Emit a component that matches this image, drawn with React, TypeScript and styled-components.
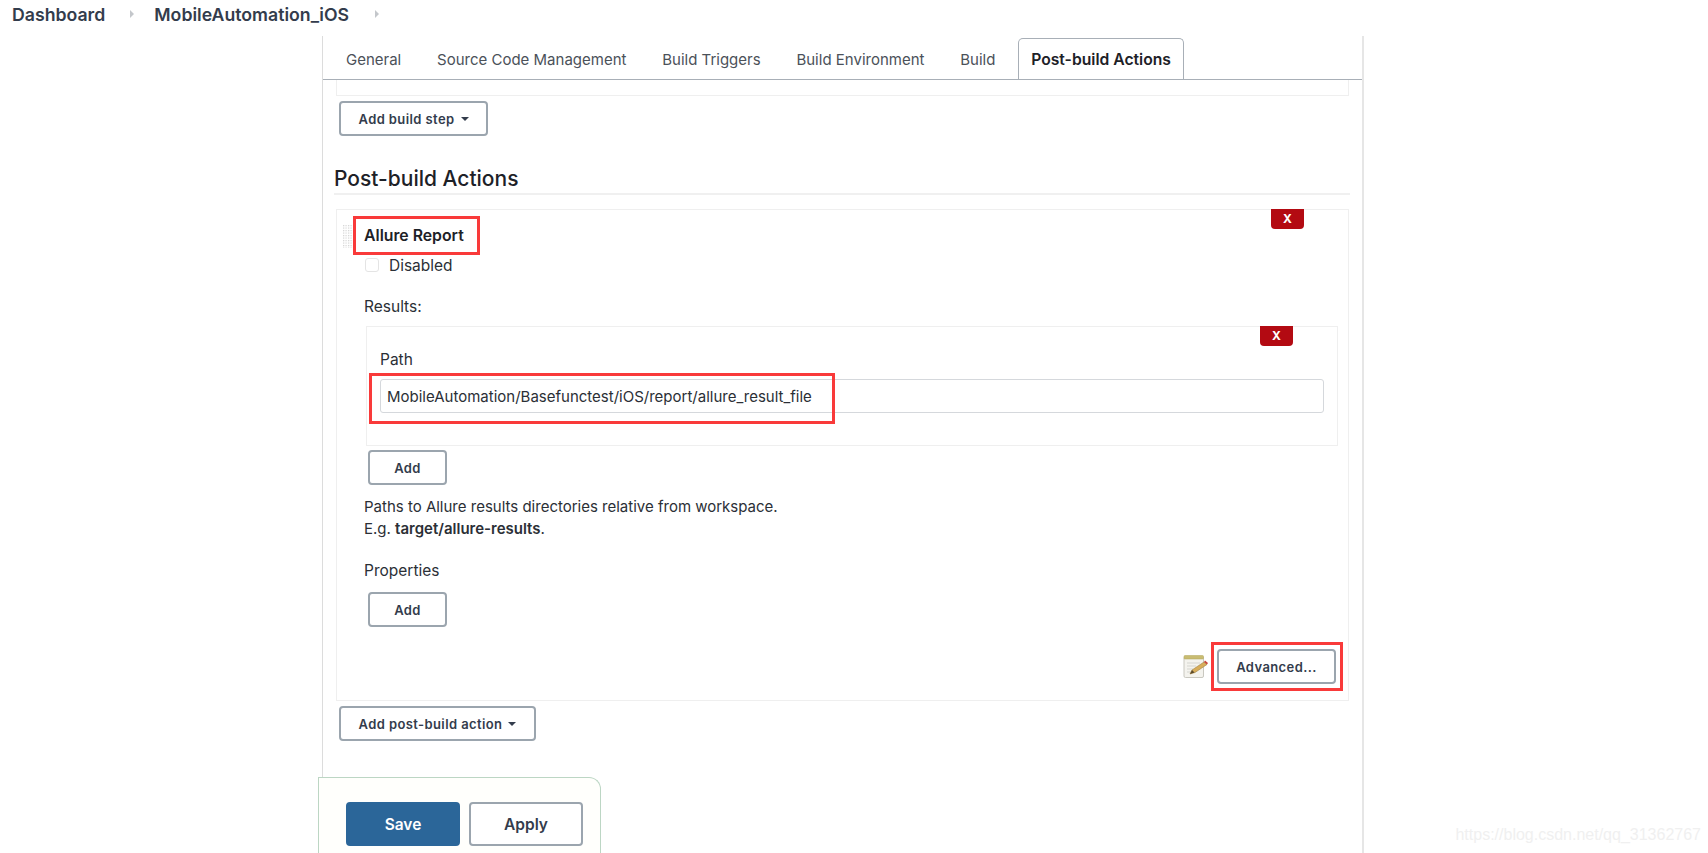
import styled, { createGlobalStyle } from 'styled-components';

const GlobalStyle = createGlobalStyle`
  html,
  body {
    margin: 0;
    height: 100%;
    overflow: hidden;
    background: #fff;
    font-family: Inter, 'Liberation Sans', sans-serif;
    color: #2b2f36;
  }

  * {
    box-sizing: border-box;
  }
`;

const Page = styled.div`
  position: relative;
  width: 1708px;
  height: 853px;
  overflow: hidden;
`;

const Breadcrumbs = styled.nav`
  display: flex;
  align-items: center;
  height: 36px;
  padding: 0 0 8px 12px;
  font-size: 17.7px;
  font-weight: 600;
  color: #333c4c;
`;

const CrumbArrow = styled.span<{ $before: number; $after: number }>`
  width: 0;
  height: 0;
  margin: 0 ${({ $after }) => $after}px 0 ${({ $before }) => $before}px;
  border-left: 4px solid #c4c7cb;
  border-top: 4px solid transparent;
  border-bottom: 4px solid transparent;
`;

const Column = styled.main`
  display: flex;
  flex-direction: column;
  width: 1042px;
  height: 817px;
  margin-left: 322px;
  border-left: 1px solid #dcdcdc;
  border-right: 2px solid #e6e6e6;
`;

const TabBar = styled.div`
  display: flex;
  align-items: flex-end;
  flex: none;
  height: 44px;
  padding: 2px 0 0 10px;
  border-bottom: 1px solid #a8afb7;
`;

const Tab = styled.div<{ $active?: boolean }>`
  height: 41px;
  padding: 0 12px;
  margin-right: ${({ $active }) => ($active ? 0 : 9.8)}px;
  border: 1px solid ${({ $active }) => ($active ? '#a8afb7' : 'transparent')};
  border-bottom: 0;
  border-radius: 5px 5px 0 0;
  font-size: ${({ $active }) => ($active ? 15.7 : 15)}px;
  font-weight: ${({ $active }) => ($active ? 600 : 400)};
  line-height: 41px;
  color: ${({ $active }) => ($active ? '#1d2127' : '#4b5159')};
  white-space: nowrap;
`;

const PreviousSection = styled.div`
  flex: none;
  height: 16px;
  margin: 0 13px;
  border: 1px solid #efefef;
  border-top: 0;
`;

const Button = styled.button<{ $width: number }>`
  display: flex;
  align-items: center;
  justify-content: center;
  gap: 6px;
  flex: none;
  width: ${({ $width }) => $width}px;
  height: 35px;
  padding: 0;
  background: #fff;
  border: 2px solid #9ba5ae;
  border-radius: 4px;
  font-family: inherit;
  font-size: 13px;
  font-weight: 600;
  letter-spacing: 0.4px;
  color: #333c4c;
`;

const AddStepButton = styled(Button)`
  margin: 5px 0 0 16px;
`;

const Caret = styled.span`
  width: 0;
  height: 0;
  border-top: 4px solid #333c4c;
  border-left: 4px solid transparent;
  border-right: 4px solid transparent;
`;

const SectionTitle = styled.h2`
  flex: none;
  height: 30px;
  margin: 29px 12px 0 11px;
  border-bottom: 2px solid #f0f0f0;
  font-size: 21px;
  font-weight: 500;
  line-height: 28px;
  color: #1d2127;
`;

const ActionBox = styled.section`
  position: relative;
  flex: none;
  height: 492px;
  margin: 14px 13px 0;
  padding: 0 12px 0 27px;
  border: 1px solid #efefef;
`;

const DragHandle = styled.svg`
  position: absolute;
  top: 15px;
  left: 6px;
`;

const DeleteButton = styled.div`
  position: absolute;
  top: -1px;
  right: 44px;
  width: 33px;
  height: 20px;
  background: #b30a12;
  border-radius: 0 0 4px 4px;
  font-size: 12px;
  font-weight: 700;
  line-height: 20px;
  text-align: center;
  color: #fff;
`;

const TitleRow = styled.div`
  margin-top: 15px;
`;

const ActionTitle = styled.span`
  position: relative;
  font-size: 15.8px;
  font-weight: 600;
  line-height: 22px;
  color: #1d2127;
`;

const RedMark = styled.span<{ $top: number; $right: number; $bottom: number; $left: number }>`
  position: absolute;
  top: ${({ $top }) => $top}px;
  right: ${({ $right }) => $right}px;
  bottom: ${({ $bottom }) => $bottom}px;
  left: ${({ $left }) => $left}px;
  border: 3px solid #f93a3a;
  pointer-events: none;
`;

const CheckRow = styled.div`
  display: flex;
  align-items: center;
  height: 22px;
  margin-top: 7px;
  padding-left: 1px;
  font-size: 15.5px;
`;

const CheckBox = styled.span`
  width: 14px;
  height: 14px;
  margin-right: 10px;
  border: 1px solid #e4e4e4;
  border-radius: 3px;
`;

const Label = styled.div<{ $top: number }>`
  margin-top: ${({ $top }) => $top}px;
  font-size: 15.5px;
  line-height: 22px;
  color: #2b2f36;
`;

const ResultsBox = styled.div`
  position: relative;
  width: 972px;
  height: 120px;
  margin: 8px 0 0 2px;
  padding: 22px 13px 0;
  border: 1px solid #efefef;
`;

const PathField = styled.div`
  position: relative;
  margin-top: 8px;
`;

const PathInput = styled.input`
  display: block;
  width: 100%;
  height: 34px;
  padding: 0 6px;
  border: 1px solid #d5d8dc;
  border-radius: 3px;
  font-family: inherit;
  font-size: 15px;
  color: #2b2f36;
  background: #fff;
`;

const SmallButton = styled(Button)<{ $top: number }>`
  margin: ${({ $top }) => $top}px 0 0 4px;
`;

const Help = styled.div`
  margin-top: 11px;
  font-size: 15px;
  line-height: 22px;
  color: #2b2f36;
`;

const HelpStrong = styled.strong`
  font-weight: 600;
`;

const AdvancedRow = styled.div`
  display: flex;
  align-items: center;
  justify-content: flex-end;
  gap: 9px;
  margin-top: 22px;
`;

const AdvancedButton = styled(Button)`
  position: relative;
`;

const AddActionButton = styled(Button)`
  margin: 5px 0 0 16px;
`;

const BottomBar = styled.footer`
  display: flex;
  gap: 9px;
  flex: none;
  width: 283px;
  height: 80px;
  margin: 36px 0 0 -5px;
  padding: 24px 0 0 27px;
  background: #fffffc;
  border: 1px solid #bcd6c4;
  border-bottom: 0;
  border-radius: 0 12px 0 0;
`;

const BarButton = styled.button<{ $primary?: boolean }>`
  width: 114px;
  height: 44px;
  padding: 0;
  background: ${({ $primary }) => ($primary ? '#2b6699' : '#fff')};
  border: 2px solid ${({ $primary }) => ($primary ? '#2b6699' : '#9ba5ae')};
  border-radius: 4px;
  font-family: inherit;
  font-size: 15.5px;
  font-weight: 600;
  color: ${({ $primary }) => ($primary ? '#fff' : '#333c4c')};
`;

const Watermark = styled.div`
  position: absolute;
  right: 7px;
  bottom: 8px;
  font-family: 'Liberation Sans', Arial, sans-serif;
  font-size: 16px;
  line-height: 20px;
  color: #f0f0f0;
`;

const NotepadIcon = () => (
  <svg width="25" height="25" viewBox="0 0 25 25" aria-hidden>
    <path d="M1 3.5h19.5v18.5a1.5 1.5 0 0 1-1.5 1.5H2.5A1.5 1.5 0 0 1 1 22z" fill="#f4f3ee" stroke="#c9c8c0" />
    <rect x="1" y="1.5" width="19.5" height="3.5" rx="1" fill="#c9bc72" stroke="#b0a458" strokeWidth="0.5" />
    <path d="M4 9h13M4 12h9M4 15h6M4 18h5" stroke="#d5d5d0" />
    <path d="M7 20l2-4L21 8l3 2.5-12 8z" fill="#d8ad5a" stroke="#a08345" strokeWidth="0.6" />
    <path d="M21 8l3 2.5 1-1.5-3-2.5z" fill="#c8453c" />
    <path d="M7 20l2-4 2.5 2.5z" fill="#5b4a2c" />
  </svg>
);

const App = () => (
  <Page>
    <GlobalStyle />
    <Breadcrumbs>
      Dashboard
      <CrumbArrow $before={25} $after={20} />
      MobileAutomation_iOS
      <CrumbArrow $before={26} $after={0} />
    </Breadcrumbs>
    <Column>
      <TabBar>
        <Tab>General</Tab>
        <Tab>Source Code Management</Tab>
        <Tab>Build Triggers</Tab>
        <Tab>Build Environment</Tab>
        <Tab>Build</Tab>
        <Tab $active>Post-build Actions</Tab>
      </TabBar>
      <PreviousSection />
      <AddStepButton $width={149}>
        Add build step
        <Caret />
      </AddStepButton>
      <SectionTitle>Post-build Actions</SectionTitle>
      <ActionBox>
        <DragHandle width="10" height="23" aria-hidden>
          <defs>
            <pattern id="dots" width="2.5" height="2.5" patternUnits="userSpaceOnUse">
              <rect width="1.2" height="1.2" fill="#d2d2d2" />
            </pattern>
          </defs>
          <rect width="10" height="23" fill="url(#dots)" />
        </DragHandle>
        <DeleteButton>X</DeleteButton>
        <TitleRow>
          <ActionTitle>
            Allure Report
            <RedMark $top={-10} $right={-16} $bottom={-10} $left={-11} />
          </ActionTitle>
        </TitleRow>
        <CheckRow>
          <CheckBox />
          Disabled
        </CheckRow>
        <Label $top={20}>Results:</Label>
        <ResultsBox>
          <DeleteButton>X</DeleteButton>
          <Label $top={0}>Path</Label>
          <PathField>
            <PathInput readOnly value="MobileAutomation/Basefunctest/iOS/report/allure_result_file" />
            <RedMark $top={-6} $right={489} $bottom={-11} $left={-11} />
          </PathField>
        </ResultsBox>
        <SmallButton $width={79} $top={4}>
          Add
        </SmallButton>
        <Help>
          Paths to Allure results directories relative from workspace.
          <br />
          E.g. <HelpStrong>target/allure-results</HelpStrong>.
        </Help>
        <Label $top={20}>Properties</Label>
        <SmallButton $width={79} $top={10}>
          Add
        </SmallButton>
        <AdvancedRow>
          <NotepadIcon />
          <AdvancedButton $width={119}>
            Advanced...
            <RedMark $top={-9} $right={-9} $bottom={-9} $left={-8} />
          </AdvancedButton>
        </AdvancedRow>
      </ActionBox>
      <AddActionButton $width={197}>
        Add post-build action
        <Caret />
      </AddActionButton>
      <BottomBar>
        <BarButton $primary>Save</BarButton>
        <BarButton>Apply</BarButton>
      </BottomBar>
    </Column>
    <Watermark>https://blog.csdn.net/qq_31362767</Watermark>
  </Page>
);

export default App;
